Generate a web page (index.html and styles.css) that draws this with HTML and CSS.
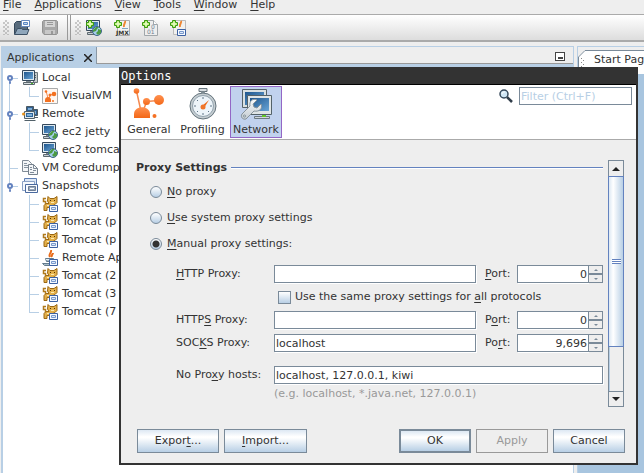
FILE: index.html
```html
<!DOCTYPE html>
<html lang="en">
<head>
<meta charset="utf-8">
<title>VisualVM</title>
<link rel="stylesheet" href="styles.css">
</head>
<body>
<svg class="defs" aria-hidden="true">
  <defs>
    <linearGradient id="screen" x2="1" y2="1"><stop stop-color="#1f568d"/><stop offset="1" stop-color="#68a4d6"/></linearGradient>
    <linearGradient id="orange" y2="1" x2="0"><stop stop-color="#ff9150"/><stop offset="1" stop-color="#f36717"/></linearGradient>
    <linearGradient id="steel" y2="1" x2="0"><stop stop-color="#fafbfc"/><stop offset="1" stop-color="#c3cbd1"/></linearGradient>
    <symbol id="monitor" viewBox="0 0 16 16">
      <path d="M11.500 2.500h4v10h-4z" fill="#c5cbcc" stroke="#6d777b"/><path d="M13 5.500h1M13 7.500h1" stroke="#566"/>
      <path d="M.5.500h12v10H.5z" fill="#dce8f0" stroke="#35485b"/><path d="M2 2h9v7H2z" fill="url(#screen)"/>
      <path d="M4 11h5v1H4z" fill="#7c888f"/><path d="M1.500 12.500h11v2h-11z" fill="#d5dbde" stroke="#5c686e"/><path d="M9 13.500h2" stroke="#4ab52c"/>
    </symbol>
    <symbol id="globe-monitor" viewBox="0 0 16 16">
      <path d="M.5.500h13v10H.5z" fill="#dce8f0" stroke="#35485b"/><path d="M2 2h10v7H2z" fill="url(#screen)"/>
      <path d="M4 11h4v1H4z" fill="#7c888f"/><path d="M1.500 12.500h8v2h-8z" fill="#c5ced4" stroke="#5c686e"/>
      <circle cx="11" cy="11" r="4.500" fill="#a5cdec" stroke="#3c6387"/><path d="M10 7l-3 3v2l3-1 1-2 2-2zM12 9l3 1v3l-3 2-2-2 2-2z" fill="#4b9a42"/>
    </symbol>
    <symbol id="remote" viewBox="0 0 16 16">
      <path d="M4.500.500h7v6h-7zM9.500 3.500h6v6h-6z" fill="#315f92" stroke="#4b5961"/><path d="M11 5h3v3h-3zM6 2h4v2H6z" fill="#79abd6"/>
      <path d="M3.500 6.500h8v5h-8z" fill="#2d649b" stroke="#e3e9ec"/><path d="M2.500 5.500h10v7h-10zM2.500 14.500h11M12 11.500h4" fill="none" stroke="#526069"/><path d="M5 8h5v2H5z" fill="#7eafd8"/><circle cx="1.500" cy="8" r="1.500" fill="#e9921c"/>
    </symbol>
    <symbol id="molecule" viewBox="0 0 32 32">
      <path d="M3.500 3l4 18M13.500 14l-3 8M13.500 13.500l12-1" fill="none" stroke="#f58a50" stroke-width="1.500"/>
      <circle cx="3.500" cy="3" r="2.800" fill="url(#orange)"/><circle cx="13.500" cy="13.500" r="3.500" fill="url(#orange)"/><circle cx="26" cy="12" r="5" fill="url(#orange)"/>
      <path d="M1 30v-4c0-9 16-9 16 0v4z" fill="url(#orange)"/><circle cx="21.500" cy="28" r="2" fill="#f57124"/>
    </symbol>
    <symbol id="visualvm" viewBox="0 0 16 16">
      <path d="M.5.500h15v15H.5z" fill="#fff7f1" stroke="#a8aaab"/><path d="M4 3l2 7M8 7l-1 4M8 7l4-1" fill="none" stroke="#f58a50"/>
      <circle cx="4" cy="3.500" r="1.300" fill="#f3701f"/><circle cx="8" cy="7" r="1.500" fill="#f3701f"/><circle cx="12" cy="6" r="2.300" fill="#f3701f"/><path d="M3 14v-2c0-4 6-4 6 0v2z" fill="#f3701f"/><circle cx="11" cy="13" r="1" fill="#f3701f"/>
    </symbol>
    <symbol id="coredump" viewBox="0 0 16 16">
      <path d="M.5.500h6l3 3v8h-9z" fill="#f4f6f8" stroke="#808b96"/><path d="M2 3.500h3M2 5.500h5M2 7.500h5" stroke="#8995a1"/>
      <path d="M6.500 4.500h5l4 4v6h-9z" fill="#f4f6f8" stroke="#75818d"/><path d="M11.500 4.500v4h4M8 7.500h2M8 9.500h2M11 10.500h3M8 12.500h4" fill="none" stroke="#7f8b98"/>
    </symbol>
    <symbol id="snapshots" viewBox="0 0 16 16">
      <path d="M2.500.500h12v9h-12z" fill="#dce7f5" stroke="#5e7eb2"/><path d="M.5 3.500h12v9H.5z" fill="#f6f9fd" stroke="#8ba1c5"/>
      <path d="M3.500 6.500h12v8h-12z" fill="#f9fbff" stroke="#49699e"/><path d="M6.500 8.500h7v4h-7z" fill="#9baabd" stroke="#6c7d95"/><path d="M8 10.500h4" stroke="#fff"/>
    </symbol>
    <symbol id="frame" viewBox="0 0 9 7"><path d="M.5.500h8v6h-8z" fill="#f5f9ff" stroke="#3c61a2"/><path d="M2.500 2.500h4v2h-4z" fill="#dbe9fb" stroke="#7898cb"/></symbol>
    <symbol id="tomcat" viewBox="0 0 16 16">
      <path d="M6 .5l2 2h4l3-2v6l-2 2-2 1v5H8v-3H5v3H2v-5l2-2h3L5.500 5z" fill="#e3b04b" stroke="#9b6712"/>
      <path d="M4 2.500H1.500v3h2v3" fill="none" stroke="#b07a1c" stroke-width="1.500"/><path d="M8 4h1v1H8zM12 4h1v1h-1z" fill="#583400"/><path d="M9 6.500h3M5 9.500h4" stroke="#ffe9ad"/>
      <use href="#frame" x="7" y="9" width="9" height="7"/>
    </symbol>
    <symbol id="java" viewBox="0 0 16 16">
      <path d="M9 0c1 3-3 4-1 7M11 3c0 1-2 2-1 4" fill="none" stroke="#e96c1a" stroke-width="2"/>
      <path d="M3.500 8.500h8v3h-7zM.5 13.500h12l-1 2h-9z" fill="#a9bdca" stroke="#627b8c"/><path d="M4 9.500h4" stroke="#e7f0f4"/><use href="#frame" x="7" y="9" width="9" height="7"/>
    </symbol>
    <symbol id="plus" viewBox="0 0 8 8"><path d="M2.500.500h3v2h2v3h-2v2h-3v-2h-2v-3h2z" fill="#bdf07a" stroke="#3b9b10"/><path d="M4 2v4M2 4h4" stroke="#effcd6"/></symbol>
  </defs>
</svg>

<nav class="menubar" aria-label="Main menu">
  <a href="#"><u>F</u>ile</a><a href="#"><u>A</u>pplications</a><a href="#"><u>V</u>iew</a><a href="#"><u>T</u>ools</a><a href="#"><u>W</u>indow</a><a href="#"><u>H</u>elp</a>
</nav>

<div class="toolbars">
  <div class="toolbar toolbar-file">
    <span class="grip"></span>
    <button aria-label="Load snapshot"><svg viewBox="0 0 16 16"><path d="M.5 14V3.500l2-2h5v2h6V14z" fill="#586b7c" stroke="#35485b"/><path d="M7.500.500h8v6h-8z" fill="#fff" stroke="#6689bd"/><path d="M9.500 2.500h4v2h-4z" fill="#bed6f1" stroke="#5d88c3"/><path d="M.5 14.500l3-6h4l1 1h6.500l-2 5z" fill="#8fa6bb" stroke="#3e5266"/></svg></button>
    <button disabled aria-label="Save snapshot"><svg viewBox="0 0 16 16"><path d="M.5 1.500l1-1h13l1 1v12l-1 1H2l-1.500-2z" fill="#a8a8a8" stroke="#929292"/><path d="M3 1h10v6H3z" fill="#d5d5d5"/><path d="M5 2.500h6M5 4.500h6" stroke="#999"/><path d="M3 10h10v4H3z" fill="#c8c8c8"/><path d="M9 11h2v3H9z" fill="#999"/></svg></button>
  </div>
  <div class="toolbar toolbar-add">
    <span class="grip"></span>
    <button aria-label="Add remote host"><svg viewBox="0 0 16 16"><use href="#globe-monitor"/><use href="#plus" width="8" height="8"/></svg></button>
    <button aria-label="Add JMX connection"><svg viewBox="0 0 16 16"><path d="M3.500.500h12v15h-12z" fill="#f3f3f1" stroke="#aaa"/><path d="M11 1c1 2-2 3-1 6" fill="none" stroke="#ee8734" stroke-width="2"/><path d="M8 8.500h6" stroke="#83a5c2"/><text x="2" y="15" class="icon-text strong">JMX</text><use href="#plus" width="8" height="8"/></svg></button>
    <button aria-label="Add VM coredump"><svg viewBox="0 0 16 16"><path d="M2.500.500h9l4 4v11h-13z" fill="#eee" stroke="#a0a6aa"/><path d="M11.500.500v4h4" fill="#fff" stroke="#a0a6aa"/><text x="9" y="9" class="icon-text">0</text><text x="5" y="14" class="icon-text">01</text><use href="#plus" width="8" height="8"/></svg></button>
    <button aria-label="Add application snapshot"><svg viewBox="0 0 16 16"><path d="M3.500.500h12v14h-12z" fill="#f2f1ee" stroke="#bbb"/><path d="M11 1c1 2-2 3-1 6" fill="none" stroke="#ee8734" stroke-width="2"/><use href="#frame" x="7" y="9" width="9" height="7"/><use href="#plus" width="8" height="8"/></svg></button>
  </div>
</div>

<main class="workspace">
  <section class="explorer">
    <header class="tabstrip">
      <div class="tab">Applications <button aria-label="Close Applications"><svg viewBox="0 0 8 8"><path d="M0 0l8 8M8 0L0 8" stroke="#222" stroke-width="1.500"/></svg></button></div>
      <button class="minimize" aria-label="Minimize"></button>
    </header>
    <ul class="tree">
      <li><div class="node branch"><svg><use href="#monitor"/></svg>Local</div>
        <ul><li><div class="node"><svg><use href="#visualvm"/></svg>VisualVM</div></li></ul></li>
      <li><div class="node branch"><svg><use href="#remote"/></svg>Remote</div>
        <ul><li><div class="node"><svg><use href="#globe-monitor"/></svg>ec2 jetty</div></li>
        <li><div class="node"><svg><use href="#globe-monitor"/></svg>ec2 tomca</div></li></ul></li>
      <li><div class="node"><svg><use href="#coredump"/></svg>VM Coredump</div></li>
      <li><div class="node branch"><svg><use href="#snapshots"/></svg>Snapshots</div>
        <ul><li><div class="node"><svg><use href="#tomcat"/></svg>Tomcat (p</div></li>
        <li><div class="node"><svg><use href="#tomcat"/></svg>Tomcat (p</div></li>
        <li><div class="node"><svg><use href="#tomcat"/></svg>Tomcat (p</div></li>
        <li><div class="node"><svg><use href="#java"/></svg>Remote Ap</div></li>
        <li><div class="node"><svg><use href="#tomcat"/></svg>Tomcat (2</div></li>
        <li><div class="node"><svg><use href="#tomcat"/></svg>Tomcat (3</div></li>
        <li><div class="node"><svg><use href="#tomcat"/></svg>Tomcat (7</div></li></ul></li>
    </ul>
  </section>
  <section class="editor">
    <div class="start-tab"><svg viewBox="0 0 16 18"><path d="M0 18V7l7-7h9v18z" fill="#fff"/><path d="M.5 18V7l6.500-6.500h9" fill="none" stroke="#7a8a99"/><path d="M3 8.500h1M5 10.500h1M3 12.500h1M5 14.500h1M3 16.500h1" stroke="#888"/></svg><span>Start Page</span></div>
  </section>
</main>

<div class="dialog" role="dialog" aria-labelledby="dialog-title">
  <h1 id="dialog-title">Options</h1>
  <header class="categories">
    <button><svg viewBox="0 0 32 32"><use href="#molecule"/></svg>General</button>
    <button><svg viewBox="0 0 32 32"><path d="M12 .5h8v3h-8z" fill="#d9dee1" stroke="#66737b"/><path d="M14 3.500h4v3h-4z" fill="#8c999f"/><circle cx="16" cy="18" r="13" fill="#c5cdd1" stroke="#65747d"/><circle cx="16" cy="18" r="10.500" fill="#edf4f9" stroke="#91a1ac"/><path d="M16 9v2M16 25v2M7 18h2M23 18h2M10 12l1 1M22 24l-1-1M10 24l1-1" stroke="#5e7486"/><path d="M15 18l7-6-5 8z" fill="#f06a17"/><circle cx="16" cy="19" r="2.500" fill="#ef752a"/></svg>Profiling</button>
    <button class="selected"><svg viewBox="0 0 32 32"><path d="M2.500 1.500h24v18h-24z" fill="#d9e0e2" stroke="#546269"/><path d="M5 4h19v13H5z" fill="url(#screen)"/><path d="M7.500 7.500h24v19h-24z" fill="#dfe5e7" stroke="#546269"/><path d="M10 10h19v13H10z" fill="url(#screen)"/><path d="M14.500 28.500h15v2h-15z" fill="#d1d7db" stroke="#6c7a83"/><path d="M22 27h4v2h-4z" fill="#62c728"/><path d="M2 26l8-8c-1-5 3-8 7-6l-4 4 1 3 3 1 4-4c2 5-2 8-7 7l-8 8c-3 1-6-2-4-5z" fill="url(#steel)" stroke="#87939b"/><circle cx="4.500" cy="28" r="1" fill="#fff" stroke="#7a8991"/></svg>Network</button>
    <div class="search"><svg viewBox="0 0 14 14"><path d="M8 8l5 5" stroke="#303d4a" stroke-width="2.500"/><circle cx="5" cy="5" r="4" fill="#cfe6f5" stroke="#35485a" stroke-width="1.500"/><path d="M3 5c0-2 2-2 3-2" stroke="#fff" fill="none"/></svg><input type="text" placeholder="Filter (Ctrl+F)" aria-label="Filter"></div>
  </header>

  <div class="viewport">
    <form class="settings" id="settings">
      <h2>Proxy Settings</h2>
      <label class="radio"><input type="radio" name="proxy"><span><u>N</u>o proxy</span></label>
      <label class="radio"><input type="radio" name="proxy"><span><u>U</u>se system proxy settings</span></label>
      <label class="radio"><input type="radio" name="proxy" checked><span><u>M</u>anual proxy settings:</span></label>
      <div class="fields">
        <label for="http"><span><u>H</u>TTP Proxy:</span></label><input type="text" id="http"><label for="http-port"><span><u>P</u>ort:</span></label>
        <div class="spinner"><input type="text" id="http-port" value="0"><button type="button" aria-label="Increase HTTP port"></button><button type="button" class="down" aria-label="Decrease HTTP port"></button></div>
        <label class="same"><input type="checkbox"><span>Use the same proxy settings for <u>a</u>ll protocols</span></label>
        <label for="https"><span>HTTP<u>S</u> Proxy:</span></label><input type="text" id="https"><label for="https-port"><span>P<u>o</u>rt:</span></label>
        <div class="spinner"><input type="text" id="https-port" value="0"><button type="button" aria-label="Increase HTTPS port"></button><button type="button" class="down" aria-label="Decrease HTTPS port"></button></div>
        <label for="socks"><span>SOC<u>K</u>S Proxy:</span></label><input type="text" id="socks" value="localhost"><label for="socks-port"><span>Po<u>r</u>t:</span></label>
        <div class="spinner"><input type="text" id="socks-port" value="9,696"><button type="button" aria-label="Increase SOCKS port"></button><button type="button" class="down" aria-label="Decrease SOCKS port"></button></div>
      </div>
      <div class="fields hosts">
        <label for="hosts"><span>No Pro<u>x</u>y hosts:</span></label><input class="wide" type="text" id="hosts" value="localhost, 127.0.0.1, kiwi">
        <p class="hint">(e.g. localhost, *.java.net, 127.0.0.1)</p>
      </div>
    </form>
    <div class="scrollbar">
      <button aria-label="Scroll up"></button>
      <div class="thumb"></div><div class="track"></div>
      <button class="down" aria-label="Scroll down"></button>
    </div>
  </div>

  <footer class="actions">
    <button class="export">Expor<u>t</u>...</button><button class="import"><u>I</u>mport...</button>
    <button class="default">OK</button><button disabled>Apply</button><button>Cancel</button>
  </footer>
</div>
</body>
</html>
```

FILE: styles.css
```css
*, *::before, *::after { box-sizing: border-box; }
html, body { height: 100%; }
body {
  display: flex;
  flex-direction: column;
  position: relative;
  margin: 0;
  overflow: hidden;
  background: #eee;
  color: #333;
  font: 11px/14px "DejaVu Sans", sans-serif;
}
button, input { margin: 0; padding: 0; border: 0; border-radius: 0; background: none; color: inherit; font: inherit; }
u { text-underline-offset: 2px; text-decoration-thickness: 1px; text-decoration-skip-ink: none; }
ul { margin: 0; padding: 0; list-style: none; }
svg { flex: none; }
.defs { position: absolute; width: 0; height: 0; }
.icon-text { fill: #6f8091; font: 6px "DejaVu Sans", sans-serif; }
.icon-text.strong { fill: #333; font-weight: bold; }

.menubar { display: flex; gap: 13px; flex: none; height: 14px; padding-left: 3px; line-height: 9px; white-space: nowrap; }
.menubar a { color: inherit; text-decoration: none; }

.toolbars { display: flex; flex: none; height: 28px; border-top: 1px solid #aaa; border-bottom: 2px solid #aaa; background: linear-gradient(#fff, #ddd); }
.toolbar { display: flex; align-items: center; gap: 12px; padding-left: 3px; }
.toolbar-file { width: 68px; border-right: 1px solid #999; }
.toolbar-add { flex: 1; margin-left: 2px; padding-left: 4px; border-left: 1px solid #999; }
.toolbar svg { display: block; width: 16px; height: 16px; }
.grip { width: 6px; height: 15px; margin-right: -7px; background: conic-gradient(#999 25%, transparent 0 50%, #999 0 75%, transparent 0) 0 0 / 4px 4px; opacity: 0.5; }

.workspace { display: flex; flex: 1; gap: 3px; min-height: 0; padding: 4px 0 0 1px; }
.explorer { flex: 1; display: flex; flex-direction: column; min-width: 0; border: solid #b8cfe5; border-width: 1px 1px 0 2px; background: #fff; }
.tabstrip { display: flex; align-items: flex-start; justify-content: space-between; flex: none; height: 21px; background: linear-gradient(#eee 16px, #999 16px, #999 17px, #b8cfe5 17px); }
.tab { display: flex; align-items: center; gap: 10px; height: 17px; padding: 4px 4px 0; border-right: 1px solid #8a98a5; background: #b8cfe5; }
.tab svg { display: block; width: 8px; height: 8px; }
.minimize { width: 10px; height: 9px; margin: 5px 8px 0; border: 1px solid #444; background: linear-gradient(#444, #444) center 4px / 5px 2px no-repeat, #fff; }

.tree > li { position: relative; }
.tree > li::before { content: ""; position: absolute; left: 6px; top: 0; width: 1px; height: 100%; background: #b8cfe5; }
.tree > li:first-child::before { top: 9px; height: calc(100% - 9px); }
.tree > li:last-child::before { height: 9px; }
.node { position: relative; display: flex; align-items: center; gap: 4px; height: 18px; padding-left: 19px; line-height: 16px; white-space: nowrap; }
.node svg { width: 16px; height: 16px; }
.node::before { content: ""; position: absolute; left: 7px; top: 9px; width: 8px; height: 1px; background: #b8cfe5; }
.branch::after { content: ""; position: absolute; left: 4px; top: 6px; width: 6px; height: 6px; border: 2px solid #6382bf; border-radius: 50%; background: #fff; box-shadow: 0 4px 0 -2px #6382bf, 0 5px 0 -2px #6382bf; }
.tree ul .node { padding-left: 39px; }
.tree ul .node::before { left: 26px; width: 10px; }
.tree ul li { position: relative; }
.tree ul li::before { content: ""; position: absolute; left: 26px; top: 0; width: 1px; height: 18px; background: #b8cfe5; }
.tree ul li:last-child::before { height: 9px; }
.tree { padding-top: 1px; }

.editor { width: 67px; overflow: hidden; border-top: 1px solid #b8cfe5; border-left: 1px solid #b8cfe5; background: linear-gradient(#eee 20px, #fff 20px, #fff 27px, #a8c5df 27px); }
.start-tab { display: flex; margin-top: 3px; white-space: nowrap; }
.start-tab svg { width: 16px; height: 18px; }
.start-tab span { height: 18px; padding-top: 2px; border-top: 1px solid #7a8a99; background: #fff; }

.dialog { position: absolute; top: 67px; right: 6px; bottom: 8px; left: 119px; display: flex; flex-direction: column; border: 2px solid #333; border-width: 1px 2px 2px; background: #eee; }
.dialog h1 { flex: none; height: 17px; margin: 0; border-bottom: 1px solid #000; background: #333; color: #fff; font: 12px/16px "DejaVu Sans Mono", monospace; }
.categories { display: flex; align-items: flex-start; flex: none; height: 55px; padding: 1px 4px 0 2px; border-bottom: 1px solid #aaa; background: #fff; }
.categories > button { display: flex; flex-direction: column; align-items: center; width: 52px; height: 52px; padding-top: 1px; border: 1px solid transparent; line-height: 20px; }
.categories > button:nth-child(2) { width: 55px; }
.categories > button svg { width: 32px; height: 32px; }
.categories .selected { border-color: #9367c6; background: #c1d2ee; }
.search { display: flex; align-items: flex-start; gap: 6px; margin: 1px 0 0 auto; }
.search svg { width: 14px; height: 14px; margin-top: 2px; }
.search input { width: 113px; }

input[type="text"] { min-width: 0; height: 18px; padding: 0 1px; border: 1px solid #7a8a99; background: #fff; box-shadow: 1px 1px #fff; }
input::placeholder { color: #b8cfe5; opacity: 1; }

.viewport { display: flex; flex: 1; gap: 5px; min-height: 0; padding: 20px 12px 0 15px; }
.settings { flex: 1; min-width: 0; }
.settings h2 { display: flex; align-items: center; gap: 4px; height: 16px; margin: 0 0 3px; font-size: 11px; }
.settings h2::after { content: ""; flex: 1; height: 2px; border-bottom: 1px solid #fff; background: #6382bf; }
.radio { display: flex; align-items: center; gap: 5px; height: 26px; padding-left: 14px; }
input[type="radio"], input[type="checkbox"] { appearance: none; flex: none; border: 1px solid #7a8a99; background: linear-gradient(#fff, #b8cfe5); }
input[type="radio"] { width: 12px; height: 12px; border-radius: 50%; }
input[type="radio"]:checked { background: radial-gradient(circle, #333 3px, transparent 4px), linear-gradient(#fff, #b8cfe5); }
input[type="checkbox"] { width: 13px; height: 13px; }
.fields { display: grid; grid-template-columns: 98px 1fr 32px 86px; grid-auto-rows: 18px; row-gap: 5px; align-items: center; margin-top: 8px; padding-left: 40px; }
.fields.hosts { row-gap: 1px; margin-top: 14px; }
.fields > input:not(.wide) { margin-right: 9px; }
.same { grid-column: 2 / -1; display: flex; align-items: center; gap: 4px; padding-left: 4px; white-space: nowrap; }
.wide { grid-column: 2 / -1; }
.hint { grid-column: 2 / -1; margin: 0; color: #999; }
.spinner { display: grid; grid-template-columns: 1fr 15px; grid-template-rows: 9px 9px; }
.spinner input { grid-row: 1 / 3; width: 100%; border-right: 0; text-align: right; }
.spinner button { display: grid; place-items: center; border: 1px solid #7a8a99; }
.spinner button::after { content: ""; border: solid transparent; border-width: 0 2px 2px; border-bottom-color: #7a8a99; }
.spinner .down::after { transform: rotate(180deg); }

.scrollbar { display: flex; flex-direction: column; width: 16px; height: 247px; border: 1px solid #7a8a99; }
.scrollbar button { display: grid; place-items: center; flex: none; height: 15px; }
.scrollbar button::after { content: ""; border: solid transparent; border-width: 0 4px 4px; border-bottom-color: #222; }
.scrollbar .down { border-top: 1px solid #7a8a99; }
.scrollbar .down::after { transform: rotate(180deg); }
.thumb { display: grid; place-items: center; flex: 171; margin: 0 -1px; border: 1px solid #6382bf; background: linear-gradient(90deg, #dce8f3, #fff 30%, #b8cfe5); }
.thumb::after { content: ""; width: 9px; height: 5px; background: linear-gradient(#6382bf 1px, #fff 1px 2px, #6382bf 2px 3px, #fff 3px 4px, #6382bf 4px); }
.track { flex: 45; border-left: 1px solid #b8cfe5; }

.actions { display: flex; gap: 5px; flex: none; padding: 0 11px 10px 16px; }
.actions button { width: 72px; height: 24px; border: 1px solid #7a8a99; background: linear-gradient(#dde8f3, #fff 30%, #fff 35%, #b8cfe5); }
.actions .export { width: 82px; }
.actions .import { width: 83px; margin-right: auto; }
.actions .default { border-width: 2px; }
.actions button:disabled { border-color: #999; background: none; color: #999; }
```
